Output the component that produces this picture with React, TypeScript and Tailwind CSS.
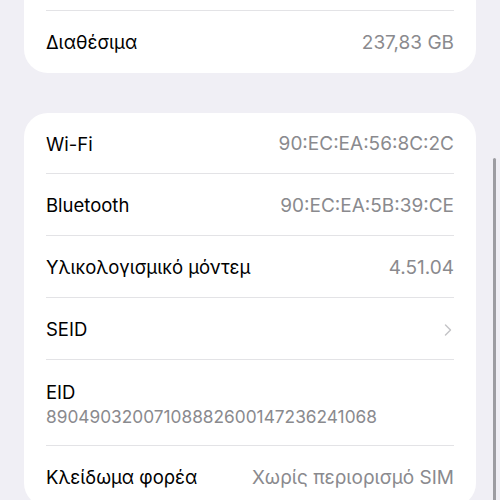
import { ChevronRight } from "lucide-react";

type Row = { label: string; value?: string; chevron?: boolean; sub?: string };

const rows: Row[] = [
  { label: "Wi-Fi", value: "90:EC:EA:56:8C:2C" },
  { label: "Bluetooth", value: "90:EC:EA:5B:39:CE" },
  { label: "Υλικολογισμικό μόντεμ", value: "4.51.04" },
  { label: "SEID", chevron: true },
  { label: "EID", sub: "89049032007108882600147236241068" },
  { label: "Κλείδωμα φορέα", value: "Χωρίς περιορισμό SIM" },
];

export default function App() {
  return (
    <div
      className="relative h-[500px] w-[500px] overflow-hidden bg-[#f0eff5] text-black"
      style={{ fontFamily: "Inter, 'Noto Sans', sans-serif" }}
    >
      {/* πάνω κάρτα (κομμένη) */}
      <div className="mx-6 rounded-b-[24px] bg-white">
        <div className="h-[10px]" />
        <div className="mx-[22px] border-t border-[#e3e3e6]" />
        <div className="flex h-[62px] items-center justify-between px-[22px] pt-[2px] text-[18.5px]">
          <span>Διαθέσιμα</span>
          <span className="text-[19px] text-[#8a8a8e]">237,83 GB</span>
        </div>
      </div>

      {/* κάρτα πληροφοριών */}
      <div className="mx-6 mt-[40px] rounded-[24px] bg-white">
        {rows.map((r, i) => (
          <div key={r.label}>
            {i > 0 && <div className="mx-[22px] border-t border-[#e3e3e6]" />}
            {r.sub ? (
              <div className="flex h-[85px] flex-col justify-center px-[22px] pt-[2px]">
                <span className="text-[18.5px] leading-[26px]">{r.label}</span>
                <span className="text-[17.3px] leading-[24px] text-[#8a8a8e]">{r.sub}</span>
              </div>
            ) : (
              <div
                className={`flex items-center justify-between px-[22px] pt-[3px] text-[18.5px] ${
                  i === 0 ? "h-[60px]" : "h-[61px]"
                }`}
              >
                <span>{r.label}</span>
                {r.chevron ? (
                  <ChevronRight className="mr-[-4px] h-5 w-5 text-[#c4c4c7]" strokeWidth={1.75} />
                ) : (
                  <span className="text-[19px] text-[#8a8a8e]">{r.value}</span>
                )}
              </div>
            )}
          </div>
        ))}
      </div>

      {/* μπάρα κύλισης */}
      <div className="absolute right-[4px] top-[158px] h-[360px] w-[3px] rounded-full bg-[#9d9da2]" />
    </div>
  );
}
